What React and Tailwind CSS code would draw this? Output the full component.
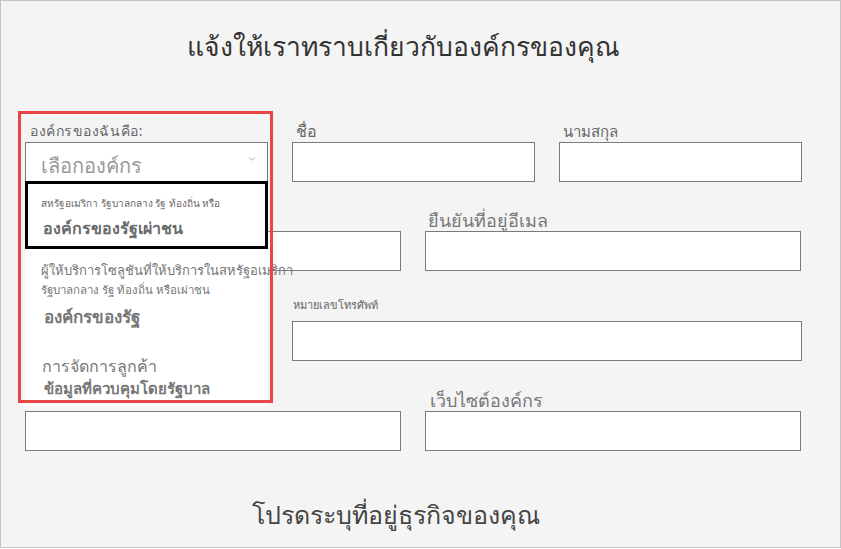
import { FiChevronDown } from 'react-icons/fi';

const font = { fontFamily: "'Noto Sans', 'DejaVu Sans', sans-serif" };

const Input = ({ className = '' }) => (
  <div className={`h-[40px] bg-white border border-[#7a7a7a] ${className}`} />
);

export default function App() {
  return (
    <div className="w-[841px] h-[548px] bg-[#f4f4f4] border border-[#c4c4c4] overflow-hidden text-[#666]" style={font}>
      <h1 className="mt-[27px] pr-[34px] text-center text-[26.5px] leading-[36px] text-[#333]">แจ้งให้เราทราบเกี่ยวกับองค์กรของคุณ</h1>

      <div className="mt-[56px] ml-[24px] w-[777px]">
        {/* Row 1 */}
        <div className="flex gap-[24px]">
          <div className="relative w-[243px]">
            <div className="h-[22px] pl-[5px] text-[14px] leading-[22px] tracking-[0.04em] text-[#666]">องค์กรของฉันคือ:</div>
            <div className="h-[40px] bg-white border border-[#7a7a7a] flex items-end justify-between pl-[15px] pr-[10px] pb-[1px]">
              <span className="text-[20px] leading-[28px] text-[#999]">เลือกองค์กร</span>
              <FiChevronDown className="self-center text-[#999] text-[10px] mt-[-6px]" />
            </div>

            {/* dropdown list */}
            <div className="absolute left-0 top-[61px] w-[243px] h-[225px] bg-white z-10">
              <div className="h-[68px] border-[3px] border-black pl-[13px] pt-[12px]">
                <div className="text-[10px] leading-[14px] text-[#666]">สหรัฐอเมริกา รัฐบาลกลาง รัฐ ท้องถิ่น หรือ</div>
                <div className="mt-[6px] pl-[2px] text-[16px] leading-[24px] font-semibold text-[#6a6a6a]">องค์กรของรัฐเผ่าชน</div>
              </div>
              <div className="pl-[16px] pt-[10px] whitespace-nowrap">
                <div className="text-[13px] leading-[22px] text-[#777]">ผู้ให้บริการโซลูชันที่ให้บริการในสหรัฐอเมริกา</div>
                <div className="text-[11.5px] leading-[18px] text-[#777]">รัฐบาลกลาง  รัฐ ท้องถิ่น หรือเผ่าชน</div>
                <div className="mt-[6px] pl-[3px] text-[17px] leading-[24px] font-semibold text-[#777]">องค์กรของรัฐ</div>
                <div className="mt-[26px] pl-[1px] text-[16px] leading-[22px] text-[#777]">การจัดการลูกค้า</div>
                <div className="mt-[1px] pl-[3px] text-[15px] leading-[20px] font-semibold text-[#777]">ข้อมูลที่ควบคุมโดยรัฐบาล</div>
              </div>
            </div>

            {/* annotation frame */}
            <div className="absolute left-[-7px] top-[-9px] w-[255px] h-[292px] border-[3px] border-[#e94545] z-20 pointer-events-none" />
          </div>

          <div className="w-[243px]">
            <div className="h-[22px] pl-[4px] text-[16px] leading-[22px] text-[#666]">ชื่อ</div>
            <Input />
          </div>
          <div className="w-[243px]">
            <div className="h-[22px] pl-[4px] text-[15px] leading-[22px] text-[#666]">นามสกุล</div>
            <Input />
          </div>
        </div>

        {/* Row 2 */}
        <div className="mt-[27px] flex gap-[24px]">
          <div className="w-[376px]">
            <div className="h-[22px]" />
            <Input />
          </div>
          <div className="w-[376px]">
            <div className="h-[22px] pl-[3px] text-[18px] leading-[22px] text-[#777]">ยืนยันที่อยู่อีเมล</div>
            <Input />
          </div>
        </div>

        {/* Row 3 */}
        <div className="mt-[27px] flex gap-[24px]">
          <div className="w-[243px]" />
          <div className="flex-1">
            <div className="h-[23px] pl-[1px] text-[11px] leading-[14px] text-[#666]">หมายเลขโทรศัพท์</div>
            <Input />
          </div>
        </div>

        {/* Row 4 */}
        <div className="mt-[28px] flex gap-[24px]">
          <div className="w-[376px]">
            <div className="h-[22px]" />
            <Input />
          </div>
          <div className="w-[376px]">
            <div className="h-[22px] pl-[5px] text-[18px] leading-[22px] text-[#777]">เว็บไซต์องค์กร</div>
            <Input />
          </div>
        </div>
      </div>

      <h2 className="mt-[46px] pr-[50px] text-center text-[25px] leading-[34px] text-[#444]">โปรดระบุที่อยู่ธุรกิจของคุณ</h2>
    </div>
  );
}
